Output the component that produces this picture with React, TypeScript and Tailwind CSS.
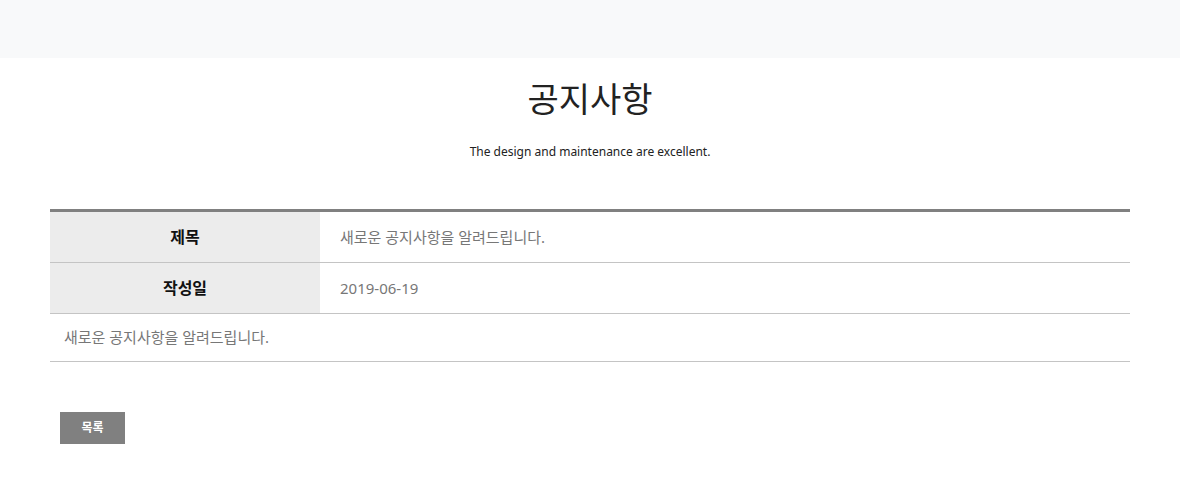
import React from "react";

// 공지사항 상세 화면

const FONT = { fontFamily: '"Noto Sans", "Noto Sans CJK KR", sans-serif' };

function InfoRow({ label, value }: { label: string; value: string }) {
  return (
    <div className="flex h-[51px] border-b border-[#c4c4c4]">
      <div className="flex w-[270px] shrink-0 items-center justify-center bg-[#ececec] text-[16px] font-bold text-[#111]">
        {label}
      </div>
      <div className="flex items-center pl-[20px] text-[15px] text-[#777]">{value}</div>
    </div>
  );
}

export default function App() {
  return (
    <div className="min-h-[483px] bg-white" style={FONT}>
      <div className="h-[58px] bg-[#f8f9fa]" />

      <div className="px-[50px]">
        <div className="flex flex-col items-center">
          <h1 className="mt-[15px] text-[34px] leading-[52px] font-normal text-[#222]">공지사항</h1>
          <p className="mt-[18px] text-[12px] leading-[18px] text-[#222]">
            The design and maintenance are excellent.
          </p>
        </div>

        <div className="mt-[48px] border-t-[3px] border-[#808080]">
          <InfoRow label="제목" value="새로운 공지사항을 알려드립니다." />
          <InfoRow label="작성일" value="2019-06-19" />
          <div className="flex h-[48px] items-center border-b border-[#c4c4c4] pl-[14px] text-[15px] text-[#777]">
            새로운 공지사항을 알려드립니다.
          </div>
        </div>

        <button className="mt-[50px] ml-[10px] flex h-[32px] w-[65px] items-center justify-center bg-[#808080] text-[12px] font-bold text-white">
          목록
        </button>
      </div>
    </div>
  );
}
